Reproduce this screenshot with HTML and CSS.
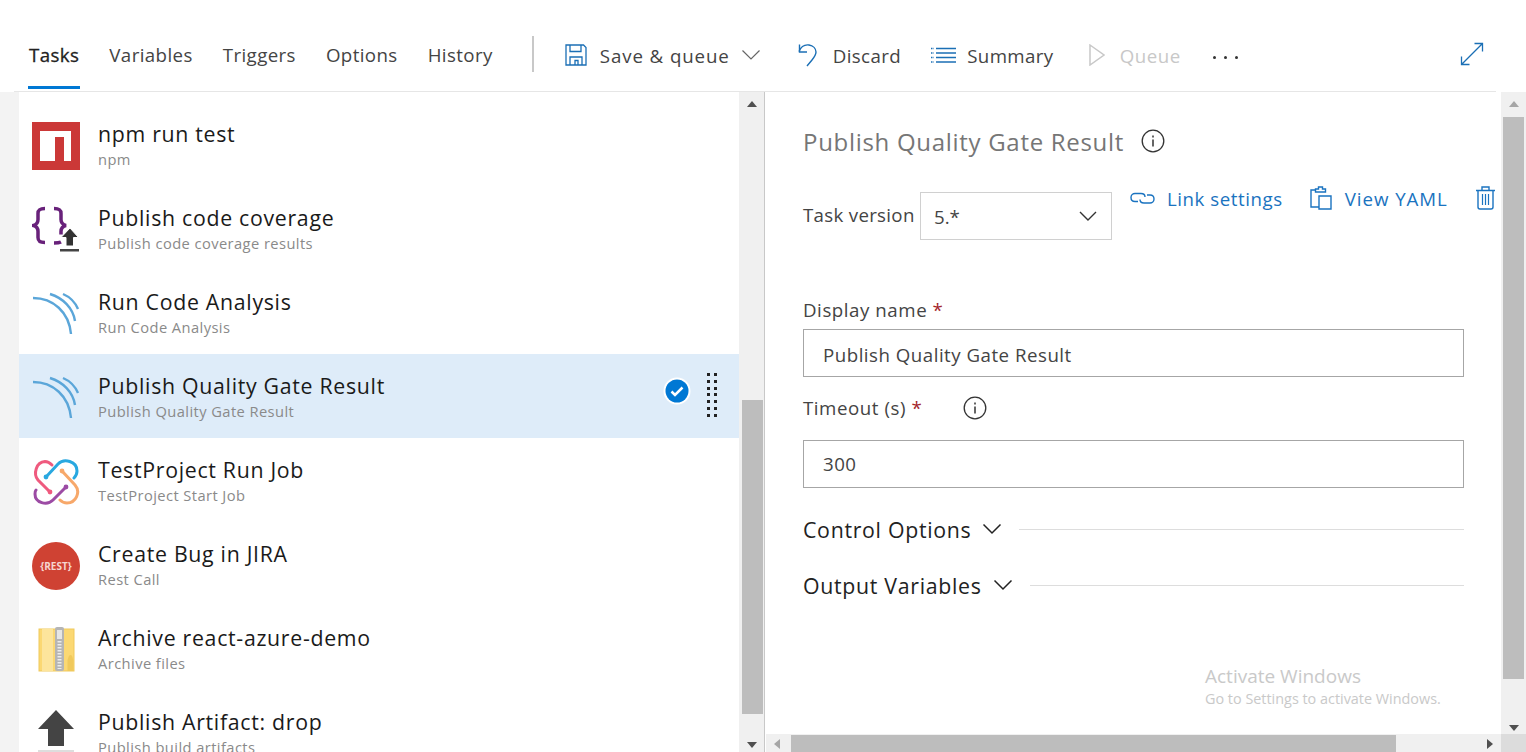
FILE: index.html
```html
<!doctype html>
<html lang="en">
<head>
    <meta charset="UTF-8">
    <title>Tasks</title>
    <link rel="stylesheet" href="styles.css">
</head>
<body>

<div class="topbar">
    <div class="tabs">
        <a class="tab tab-active">Tasks</a>
        <a class="tab">Variables</a>
        <a class="tab">Triggers</a>
        <a class="tab">Options</a>
        <a class="tab">History</a>
    </div>
    <div class="divider"></div>
    <div class="commands">
        <a class="cmd cmd-save">
            <svg width="22" height="22" viewBox="0 0 22 22" fill="none" stroke="#1b6fb5" stroke-width="1.3">
                <path d="M1 1h17.500l2.500 2.500v17.500h-20z"/>
                <path d="M5 1v6.500h11v-6.500"/>
                <path d="M5 21v-8h12v8"/>
                <path d="M10 21v-4.500h3v4.500"/>
            </svg>
            <span>Save &amp; queue</span>
            <svg class="caret" width="20" height="12" viewBox="0 0 20 12" fill="none" stroke="#666" stroke-width="1.2">
                <path d="M1.500 1.500l8.500 8.500 8.500-8.500"/>
            </svg>
        </a>
        <a class="cmd cmd-discard">
            <svg width="20" height="24" viewBox="0 0 20 24" fill="none" stroke="#1b6fb5" stroke-width="1.4">
                <path d="M1 8.500c2-5 6-7 10-6.500 4 .6 7 3.500 7 7 0 3-2 5.500-4 8l-5 6"/>
                <path d="M1.500 1.500v7.500h7.500"/>
            </svg>
            <span>Discard</span>
        </a>
        <a class="cmd cmd-summary">
            <svg width="25" height="16" viewBox="0 0 25 16" fill="none" stroke="#1b6fb5" stroke-width="1.3">
                <path d="M5 1.500h20M5 6h20M5 10.500h20M5 15h20"/>
                <path d="M0 1.500h2.500M0 6h2.500M0 10.500h2.500M0 15h2.500" stroke-dasharray="1 .5"/>
            </svg>
            <span>Summary</span>
        </a>
        <a class="cmd cmd-queue">
            <svg width="16" height="22" viewBox="0 0 16 22" fill="none" stroke="#c8c8c8" stroke-width="1.5">
                <path d="M1 1l14 10-14 10z"/>
            </svg>
            <span>Queue</span>
        </a>
        <a class="cmd-more"><i></i><i></i><i></i></a>
    </div>
    <a class="expand">
        <svg width="24" height="24" viewBox="0 0 24 24" fill="none" stroke="#1b6fb5" stroke-width="1.3">
            <path d="M1.500 22.500l21-21M14.500 1.500h8v8M1.500 14.500v8h8"/>
        </svg>
    </a>
</div>

<div class="main">
    <div class="strip"></div>

    <div class="task-list">
        <div class="task">
            <div class="task-icon">
                <svg width="48" height="48" viewBox="0 0 48 48">
                    <rect width="48" height="48" fill="#cb3837"/>
                    <path d="M8 9h31v30h-7v-24h-9v24h-15z" fill="#fff"/>
                </svg>
            </div>
            <div class="task-text">
                <div class="task-name">npm run test</div>
                <div class="task-sub">npm</div>
            </div>
        </div>
        <div class="task">
            <div class="task-icon">
                <svg width="48" height="48" viewBox="0 0 48 48" fill="none">
                    <path d="M13 2.500c-5 0-7 1-7 5v6c0 3-1 5-4.500 6 3.500 1 4.500 3 4.500 6v6c0 4 2 5 7 5" stroke="#68217a" stroke-width="3.5"/>
                    <path d="M22 2.500c5 0 7 1 7 5v6c0 3 1 5 5 6-4 1-5 3-5 6v3M22 37c3 0 5 0 7-1" stroke="#68217a" stroke-width="3.5"/>
                    <path d="M38 22l8.500 9.500h-5v8.500h-7.500v-8.500h-5z" fill="#333" stroke="#fff"/>
                    <rect x="28" y="43" width="19" height="2.500" fill="#444"/>
                </svg>
            </div>
            <div class="task-text">
                <div class="task-name">Publish code coverage</div>
                <div class="task-sub">Publish code coverage results</div>
            </div>
        </div>
        <div class="task">
            <div class="task-icon">
                <svg width="48" height="48" viewBox="0 0 48 48" fill="none" stroke="#5ba6d9" stroke-width="2.4">
                    <path d="M1 8c20 0 36 14 38 36"/>
                    <path d="M18 4c13 4 23 14 25 27"/>
                    <path d="M31 4c7 3 12 8 15 15"/>
                </svg>
            </div>
            <div class="task-text">
                <div class="task-name">Run Code Analysis</div>
                <div class="task-sub">Run Code Analysis</div>
            </div>
        </div>
        <div class="task task-selected">
            <div class="task-icon">
                <svg width="48" height="48" viewBox="0 0 48 48" fill="none" stroke="#5ba6d9" stroke-width="2.4">
                    <path d="M1 8c20 0 36 14 38 36"/>
                    <path d="M18 4c13 4 23 14 25 27"/>
                    <path d="M31 4c7 3 12 8 15 15"/>
                </svg>
            </div>
            <div class="task-text">
                <div class="task-name">Publish Quality Gate Result</div>
                <div class="task-sub">Publish Quality Gate Result</div>
            </div>
            <div class="check">
                <svg width="28" height="28" viewBox="0 0 28 28">
                    <circle cx="14" cy="14" r="13.5" fill="#fff"/>
                    <circle cx="14" cy="14" r="11.5" fill="#0078d4"/>
                    <path d="M8.500 14.500l3.500 3.500 7.500-7.500" fill="none" stroke="#fff" stroke-width="2.5"/>
                </svg>
            </div>
            <div class="grip">
                <i></i><i></i><i></i><i></i><i></i><i></i><i></i><i></i><i></i><i></i><i></i><i></i><i></i><i></i>
            </div>
        </div>
        <div class="task">
            <div class="task-icon">
                <svg width="48" height="48" viewBox="0 0 48 48" fill="none" stroke-width="3" stroke-linecap="round">
                    <path d="M18 34L6 22C1 16 4 4 13 3.500 16 3.500 18 5 20 7" stroke="#ef5a7e"/>
                    <circle cx="18" cy="34" r="2.4" fill="#ef5a7e"/>
                    <path d="M14 19L26 6C32 0 45 3 45 13 45 16 44 18 42 20" stroke="#29a8e0"/>
                    <circle cx="14" cy="19" r="2.4" fill="#29a8e0"/>
                    <path d="M30 13L43 27C49 34 44 45 35 45 32 45 30 44 28 42" stroke="#f7a86a"/>
                    <circle cx="30" cy="13" r="2.4" fill="#f7a86a"/>
                    <path d="M34 29L21 42C15 48 3 45 3 36 3 34 3 33 4 32" stroke="#9c4ba4"/>
                    <circle cx="34" cy="29" r="2.4" fill="#9c4ba4"/>
                </svg>
            </div>
            <div class="task-text">
                <div class="task-name">TestProject Run Job</div>
                <div class="task-sub">TestProject Start Job</div>
            </div>
        </div>
        <div class="task">
            <div class="task-icon">
                <svg width="48" height="48" viewBox="0 0 48 48">
                    <circle cx="24" cy="24" r="24" fill="#cf4233"/>
                    <text x="24" y="27.5" text-anchor="middle" class="rest-label">{REST}</text>
                </svg>
            </div>
            <div class="task-text">
                <div class="task-name">Create Bug in JIRA</div>
                <div class="task-sub">Rest Call</div>
            </div>
        </div>
        <div class="task">
            <div class="task-icon">
                <svg width="48" height="48" viewBox="0 0 48 48">
                    <rect x="7" y="3" width="35" height="42" fill="#fbd873" stroke="#f0c95c"/>
                    <rect x="10" y="3" width="11" height="42" fill="#fde59c"/>
                    <rect x="23" y="1" width="9" height="44" rx="2" fill="#b5b5b5"/>
                    <path d="M25 4h5v9h-5z" fill="#e6e6e6"/>
                    <path d="M27.500 15v28" stroke="#ececec" stroke-width="4" stroke-dasharray="1.5 1.5"/>
                    <path d="M38.500 29c2 0 2 3 3 5v11h-6v-11c1-2 1-5 3-5z" fill="#f0c95c"/>
                </svg>
            </div>
            <div class="task-text">
                <div class="task-name">Archive react-azure-demo</div>
                <div class="task-sub">Archive files</div>
            </div>
        </div>
        <div class="task">
            <div class="task-icon">
                <svg width="48" height="48" viewBox="0 0 48 48">
                    <path d="M24 0l18 19h-10v17h-16v-17h-10z" fill="#444"/>
                    <rect x="6" y="40" width="36" height="3" fill="#ddd"/>
                </svg>
            </div>
            <div class="task-text">
                <div class="task-name">Publish Artifact: drop</div>
                <div class="task-sub">Publish build artifacts</div>
            </div>
        </div>
    </div>

    <div class="vscroll vscroll-left">
        <div class="arrow-up"></div>
        <div class="thumb"></div>
        <div class="arrow-down"></div>
    </div>

    <div class="right">
        <div class="right-top">
            <div class="detail">
                <div class="detail-title">
                    <span>Publish Quality Gate Result</span>
                    <svg class="info" width="24" height="24" viewBox="0 0 24 24" fill="none" stroke="#333" stroke-width="1.3">
                        <circle cx="12" cy="12" r="10.8"/>
                        <path d="M12 10.500v7M12 6.500v2" stroke-width="1.5"/>
                    </svg>
                </div>

                <div class="version-row">
                    <label class="version-label">Task version</label>
                    <div class="version-select">
                        <span>5.*</span>
                        <svg width="18" height="10" viewBox="0 0 18 10" fill="none" stroke="#333" stroke-width="1.4">
                            <path d="M1 1l8 8 8-8"/>
                        </svg>
                    </div>
                    <a class="link link-settings">
                        <svg width="25" height="16" viewBox="0 0 25 16" fill="none" stroke="#1a73c0" stroke-width="1.4">
                            <path d="M8 11.500h-3c-2.500 0-4-1.500-4-4s2-4 4-4h6c2.500 0 4 1.500 4 3.500"/>
                            <path d="M17 5h3c2.500 0 4 1.500 4 4s-2 4-4 4h-6c-2.500 0-4-1.500-4-3.500"/>
                        </svg>
                        <span>Link settings</span>
                    </a>
                    <a class="link link-yaml">
                        <svg width="22" height="24" viewBox="0 0 22 24" fill="none" stroke="#1a73c0" stroke-width="1.4">
                            <path d="M5.500 4h-4.500v17h8"/>
                            <path d="M5.500 6v-3h3v-2h4v2h3v3z"/>
                            <path d="M9 10h12v13h-12z"/>
                        </svg>
                        <span>View YAML</span>
                    </a>
                    <a class="link link-trash">
                        <svg width="19" height="24" viewBox="0 0 19 24" fill="none" stroke="#1a73c0" stroke-width="1.4">
                            <path d="M0 4.500h19M6 4v-3h7v3"/>
                            <path d="M2 5v16c0 1 1 2 2 2h11c1 0 2-1 2-2v-16"/>
                            <path d="M6.500 8v11M9.500 8v11M12.500 8v11" stroke-width="1.2"/>
                        </svg>
                    </a>
                </div>

                <div class="field-label field-display">Display name <span class="req">*</span></div>
                <div class="text-input">Publish Quality Gate Result</div>

                <div class="field-label field-timeout">
                    <span>Timeout (s) <span class="req">*</span></span>
                    <svg class="info-small" width="24" height="24" viewBox="0 0 24 24" fill="none" stroke="#333" stroke-width="1.3">
                        <circle cx="12" cy="12" r="10.8"/>
                        <path d="M12 10.500v7M12 6.500v2" stroke-width="1.5"/>
                    </svg>
                </div>
                <div class="text-input text-input-number">300</div>

                <div class="section section-control">
                    <span>Control Options</span>
                    <svg width="20" height="12" viewBox="0 0 20 12" fill="none" stroke="#222" stroke-width="1.5">
                        <path d="M1.500 1.500l8.500 8.500 8.500-8.500"/>
                    </svg>
                    <div class="section-line"></div>
                </div>
                <div class="section">
                    <span>Output Variables</span>
                    <svg width="20" height="12" viewBox="0 0 20 12" fill="none" stroke="#222" stroke-width="1.5">
                        <path d="M1.500 1.500l8.500 8.500 8.500-8.500"/>
                    </svg>
                    <div class="section-line"></div>
                </div>
            </div>
            <div class="vscroll vscroll-right">
                <div class="arrow-up arrow-faded"></div>
                <div class="thumb"></div>
                <div class="arrow-down"></div>
            </div>
        </div>
        <div class="hscroll">
            <div class="hscroll-track">
                <div class="arrow-left"></div>
                <div class="hthumb"></div>
                <div class="arrow-right"></div>
            </div>
            <div class="corner"></div>
        </div>
    </div>
</div>

<div class="activate">
    <div class="activate-title">Activate Windows</div>
    <div class="activate-sub">Go to Settings to activate Windows.</div>
</div>

</body>
</html>
```

FILE: styles.css
```css
* {
    box-sizing: border-box;
}

html, body {
    height: 100%;
}

body {
    margin: 0;
    height: 752px;
    overflow: hidden;
    background-color: #fff;
    font-family: "Open Sans", sans-serif;
    color: #222;
}

svg {
    display: block;
    flex: none;
}

/* top bar */

.topbar {
    height: 92px;
    margin: 0 30px 0 14px;
    padding-left: 14px;
    display: flex;
    border-bottom: 1px solid #e6e6e6;
}

.tabs {
    display: flex;
    gap: 28px;
    height: 89px;
}

.tab {
    padding: 42px 1px 0;
    font-size: 18.7px;
    letter-spacing: 0.4px;
    line-height: 26px;
    color: #444;
    border-bottom: 3px solid transparent;
}

.tab-active {
    color: #222;
    border-bottom-color: #0078d4;
    -webkit-text-stroke: 0.3px #222;
}

.divider {
    width: 2px;
    height: 36px;
    margin: 36px 31px 0 38px;
    background-color: #c8c8c8;
}

.commands {
    display: flex;
    padding-top: 42px;
    height: 80px;
}

.cmd {
    display: flex;
    align-items: center;
    height: 26px;
    font-size: 18.7px;
    letter-spacing: 0.4px;
    color: #444;
}

.cmd-save {
    letter-spacing: 0.9px;
}

.cmd-save span {
    margin-left: 13px;
}

.caret {
    margin-left: 11px;
}

.cmd-discard {
    margin-left: 37px;
}

.cmd-discard span {
    margin-left: 15px;
}

.cmd-summary {
    margin-left: 30px;
}

.cmd-summary span {
    margin-left: 11px;
}

.cmd-queue {
    margin-left: 35px;
    color: #c8c8c8;
    letter-spacing: 0.55px;
}

.cmd-queue span {
    margin-left: 15px;
}

.cmd-more {
    display: flex;
    gap: 8px;
    margin: 14px 0 0 32px;
}

.cmd-more i {
    width: 3px;
    height: 3px;
    border-radius: 50%;
    background-color: #333;
}

.expand {
    margin: 42px 0 0 auto;
    padding-right: 12px;
}

/* main */

.main {
    display: flex;
    height: 660px;
}

.strip {
    width: 19px;
    background-color: #f3f3f3;
}

.task-list {
    width: 720px;
    padding-top: 10px;
    overflow: hidden;
}

.task {
    display: flex;
    height: 84px;
    padding: 20px 13px 0;
    position: relative;
}

.task-selected {
    background-color: #deecf9;
}

.task-icon {
    width: 48px;
    height: 48px;
    margin-right: 18px;
    flex: none;
}

.task-text {
    margin-top: -2px;
}

.task-name {
    font-size: 21.3px;
    letter-spacing: 0.7px;
    line-height: 28px;
    color: #1a1a1a;
}

.task-sub {
    font-size: 14.7px;
    letter-spacing: 0.42px;
    line-height: 19px;
    margin-top: 2px;
    color: #8a8a8a;
}

.rest-label {
    font-family: "Open Sans", sans-serif;
    font-size: 10px;
    font-weight: 700;
    fill: #f6d5d0;
}

/* these two sit on top of the selected row */

.check {
    position: absolute;
    left: 644px;
    top: 23px;
}

.grip {
    position: absolute;
    left: 688px;
    top: 19px;
    width: 12px;
    display: grid;
    grid-template-columns: 3px 3px;
    column-gap: 3.5px;
    row-gap: 3.8px;
}

.grip i {
    height: 3px;
    background-color: #222;
}

/* scrollbars */

.vscroll {
    display: flex;
    flex-direction: column;
    align-items: center;
    flex: none;
    background-color: #f0f0f0;
    position: relative;
}

.vscroll-left {
    width: 26px;
    padding: 308px 1px 0 2px;
    border-right: 1px solid #c8c8c8;
}

.vscroll-left .thumb {
    height: 314px;
    width: 21px;
    flex: none;
    background-color: #bdbdbd;
}

.vscroll-right {
    width: 25px;
    height: 642px;
    padding-top: 25px;
}

.vscroll-right .thumb {
    height: 562px;
    width: 21px;
    background-color: #bdbdbd;
}

.arrow-up, .arrow-down {
    position: absolute;
    width: 0;
    height: 0;
    border-left: 5.5px solid transparent;
    border-right: 5.5px solid transparent;
}

.arrow-up {
    top: 9px;
    border-bottom: 6px solid #505050;
}

.arrow-faded {
    border-bottom-color: #a6a6a6;
}

.arrow-down {
    bottom: 4px;
    border-top: 6px solid #505050;
}

.vscroll-right .arrow-down {
    bottom: 3px;
}

.right {
    flex: 1;
    display: flex;
    flex-direction: column;
    min-width: 0;
}

.right-top {
    display: flex;
    height: 642px;
}

.hscroll {
    display: flex;
    height: 18px;
}

.hscroll-track {
    flex: 1;
    margin-left: 1px;
    padding: 1px 0 0 25px;
    background-color: #f0f0f0;
    display: flex;
    position: relative;
}

.hthumb {
    width: 605px;
    background-color: #bdbdbd;
}

.arrow-left, .arrow-right {
    position: absolute;
    top: 5px;
    width: 0;
    height: 0;
    border-top: 5.5px solid transparent;
    border-bottom: 5.5px solid transparent;
}

.arrow-left {
    left: 8px;
    border-right: 6px solid #a6a6a6;
}

.arrow-right {
    right: 8px;
    border-left: 6px solid #505050;
}

.corner {
    width: 25px;
    background-color: #dcdcdc;
}

/* detail pane */

.detail {
    flex: 1;
    min-width: 0;
    padding: 0 37px 0 38px;
    overflow: hidden;
}

.detail-title {
    display: flex;
    align-items: center;
    height: 34px;
    margin-top: 32px;
    font-size: 24px;
    letter-spacing: 0.7px;
    color: #767676;
}

.info {
    margin-left: 17px;
}

.version-row {
    display: flex;
    margin-top: 34px;
    width: 700px;
    height: 48px;
    font-size: 18.7px;
}

.version-label {
    line-height: 46px;
    letter-spacing: 0.3px;
    margin-right: 6px;
    color: #444;
    width: 111px;
    white-space: nowrap;
}

.version-select {
    width: 192px;
    height: 48px;
    padding: 0 14px 0 13px;
    display: flex;
    align-items: center;
    justify-content: space-between;
    border: 1px solid #d0d0d0;
    color: #444;
}

.link {
    display: flex;
    align-items: center;
    height: 26px;
    margin-top: -7px;
    font-size: 18.7px;
    color: #1a73c0;
}

.link-settings {
    margin-left: 18px;
    letter-spacing: 0.55px;
}

.link-settings span {
    margin-left: 12px;
}

.link-yaml {
    margin-left: 27px;
    letter-spacing: 0.95px;
}

.link-yaml span {
    margin-left: 13px;
}

.link-trash {
    margin-left: 28px;
}

.field-label {
    font-size: 18.7px;
    letter-spacing: 0.55px;
    line-height: 26px;
    color: #444;
    display: flex;
    align-items: center;
}

.field-display {
    margin-top: 57px;
    display: block;
    height: 32px;
}

.field-timeout {
    height: 51px;
    margin-top: 12px;
    padding-bottom: 13px;
}

.req {
    color: #a4262c;
}

.info-small {
    margin-left: 41px;
}

.text-input {
    height: 48px;
    padding: 2px 19px 0;
    line-height: 46px;
    font-size: 18.7px;
    letter-spacing: 0.5px;
    color: #444;
    border: 1px solid #a6a6a6;
}

.text-input-number {
    padding-top: 0;
}

.section {
    display: flex;
    align-items: center;
    height: 32px;
    margin-top: 24px;
    font-size: 21.3px;
    letter-spacing: 0.7px;
    color: #222;
}

.section-control {
    margin-top: 25px;
}

.section svg {
    margin-left: 11px;
}

.section-line {
    flex: 1;
    height: 1px;
    margin-left: 17px;
    background-color: #ddd;
}

/* watermark over the page */

.activate {
    position: absolute;
    left: 1205px;
    top: 663px;
    color: #c9c9c9;
}

.activate-title {
    font-size: 19px;
    line-height: 26px;
}

.activate-sub {
    font-size: 14.4px;
    line-height: 20px;
}
```
